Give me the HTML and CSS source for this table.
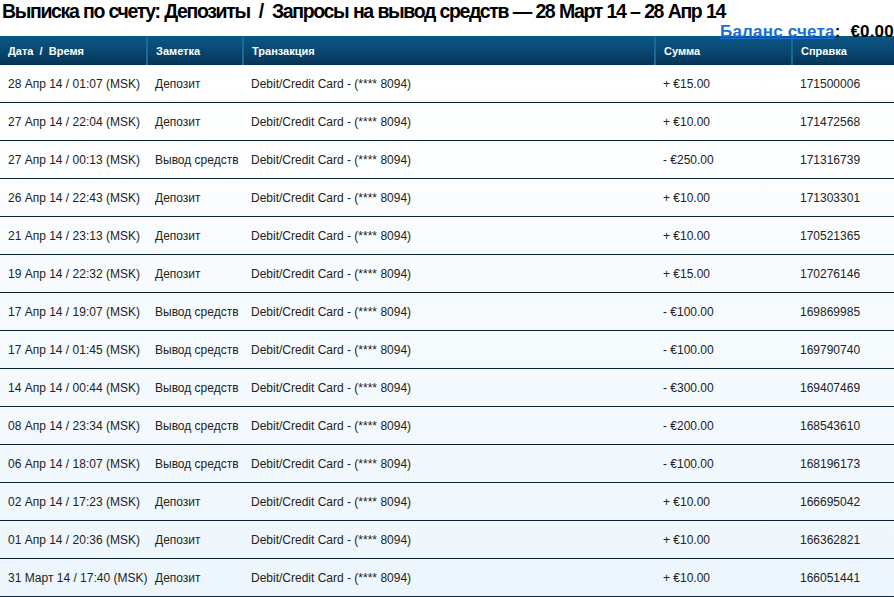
FILE: index.html
```html
<!DOCTYPE html>
<html lang="ru">
<head>
<meta charset="utf-8">
<title>Выписка по счету</title>
<link rel="stylesheet" href="styles.css">
</head>
<body>
<div class="page">
  <h1 class="title">Выписка по счету: Депозиты&nbsp; /&nbsp; Запросы на вывод средств — 28 Март 14 – 28 Апр 14</h1>
  <div class="balance"><a href="#" class="balance-link">Баланс счета</a>:&nbsp; €0.00</div>
  <table class="statement">
    <colgroup>
      <col class="c-date"><col class="c-note"><col class="c-trans"><col class="c-sum"><col class="c-ref">
    </colgroup>
    <thead>
      <tr><th>Дата&nbsp; / &nbsp;Время</th><th>Заметка</th><th>Транзакция</th><th>Сумма</th><th>Справка</th></tr>
    </thead>
    <tbody>
      <tr><td>28 Апр 14 / 01:07 (MSK)</td><td>Депозит</td><td>Debit/Credit Card - (**** 8094)</td><td>+ €15.00</td><td>171500006</td></tr>
      <tr><td>27 Апр 14 / 22:04 (MSK)</td><td>Депозит</td><td>Debit/Credit Card - (**** 8094)</td><td>+ €10.00</td><td>171472568</td></tr>
      <tr><td>27 Апр 14 / 00:13 (MSK)</td><td>Вывод средств</td><td>Debit/Credit Card - (**** 8094)</td><td>- €250.00</td><td>171316739</td></tr>
      <tr><td>26 Апр 14 / 22:43 (MSK)</td><td>Депозит</td><td>Debit/Credit Card - (**** 8094)</td><td>+ €10.00</td><td>171303301</td></tr>
      <tr><td>21 Апр 14 / 23:13 (MSK)</td><td>Депозит</td><td>Debit/Credit Card - (**** 8094)</td><td>+ €10.00</td><td>170521365</td></tr>
      <tr><td>19 Апр 14 / 22:32 (MSK)</td><td>Депозит</td><td>Debit/Credit Card - (**** 8094)</td><td>+ €15.00</td><td>170276146</td></tr>
      <tr><td>17 Апр 14 / 19:07 (MSK)</td><td>Вывод средств</td><td>Debit/Credit Card - (**** 8094)</td><td>- €100.00</td><td>169869985</td></tr>
      <tr><td>17 Апр 14 / 01:45 (MSK)</td><td>Вывод средств</td><td>Debit/Credit Card - (**** 8094)</td><td>- €100.00</td><td>169790740</td></tr>
      <tr><td>14 Апр 14 / 00:44 (MSK)</td><td>Вывод средств</td><td>Debit/Credit Card - (**** 8094)</td><td>- €300.00</td><td>169407469</td></tr>
      <tr><td>08 Апр 14 / 23:34 (MSK)</td><td>Вывод средств</td><td>Debit/Credit Card - (**** 8094)</td><td>- €200.00</td><td>168543610</td></tr>
      <tr><td>06 Апр 14 / 18:07 (MSK)</td><td>Вывод средств</td><td>Debit/Credit Card - (**** 8094)</td><td>- €100.00</td><td>168196173</td></tr>
      <tr><td>02 Апр 14 / 17:23 (MSK)</td><td>Депозит</td><td>Debit/Credit Card - (**** 8094)</td><td>+ €10.00</td><td>166695042</td></tr>
      <tr><td>01 Апр 14 / 20:36 (MSK)</td><td>Депозит</td><td>Debit/Credit Card - (**** 8094)</td><td>+ €10.00</td><td>166362821</td></tr>
      <tr><td>31 Март 14 / 17:40 (MSK)</td><td>Депозит</td><td>Debit/Credit Card - (**** 8094)</td><td>+ €10.00</td><td>166051441</td></tr>
    </tbody>
  </table>
</div>
</body>
</html>
```
FILE: styles.css
```css
html, body {
  margin: 0;
  padding: 0;
}
body {
  width: 894px;
  height: 597px;
  overflow: hidden;
  font-family: "Liberation Sans", Arial, sans-serif;
  background: linear-gradient(to bottom, #ffffff 0px, #ffffff 60px, #edf6fd 597px);
}
.page {
  position: relative;
}
.title {
  margin: 0;
  padding: 0 0 0 2px;
  font-size: 19.5px;
  line-height: 22px;
  font-weight: bold;
  color: #000;
  letter-spacing: -1.36px;
  word-spacing: 0.5px;
  white-space: nowrap;
}
.balance {
  position: absolute;
  top: 22px;
  left: 720px;
  font-size: 17px;
  line-height: 20px;
  font-weight: bold;
  color: #000;
  white-space: nowrap;
  z-index: 2;
  letter-spacing: 0.2px;
}
.balance-link {
  color: #1b6ed6;
  text-decoration: underline;
}
.statement {
  margin-top: 14px;
  width: 894px;
  border-collapse: collapse;
  table-layout: fixed;
}
.c-date { width: 147px; }
.c-note { width: 96px; }
.c-trans { width: 412px; }
.c-sum { width: 137px; }
.c-ref { width: 102px; }
.statement th {
  height: 28px;
  padding: 1px 8px 0;
  text-align: left;
  font-size: 11px;
  font-weight: bold;
  color: #ffffff;
  background: linear-gradient(to bottom, #0c5886 0%, #08466f 55%, #053354 100%);
  border-left: 2px solid #1e6897;
  white-space: nowrap;
}
.statement th:first-child {
  border-left: none;
}
.statement td {
  height: 36px;
  padding: 1px 8px 0;
  font-size: 12px;
  color: #222;
  border-bottom: 1px solid #0e2236;
  white-space: nowrap;
  overflow: hidden;
}
```
